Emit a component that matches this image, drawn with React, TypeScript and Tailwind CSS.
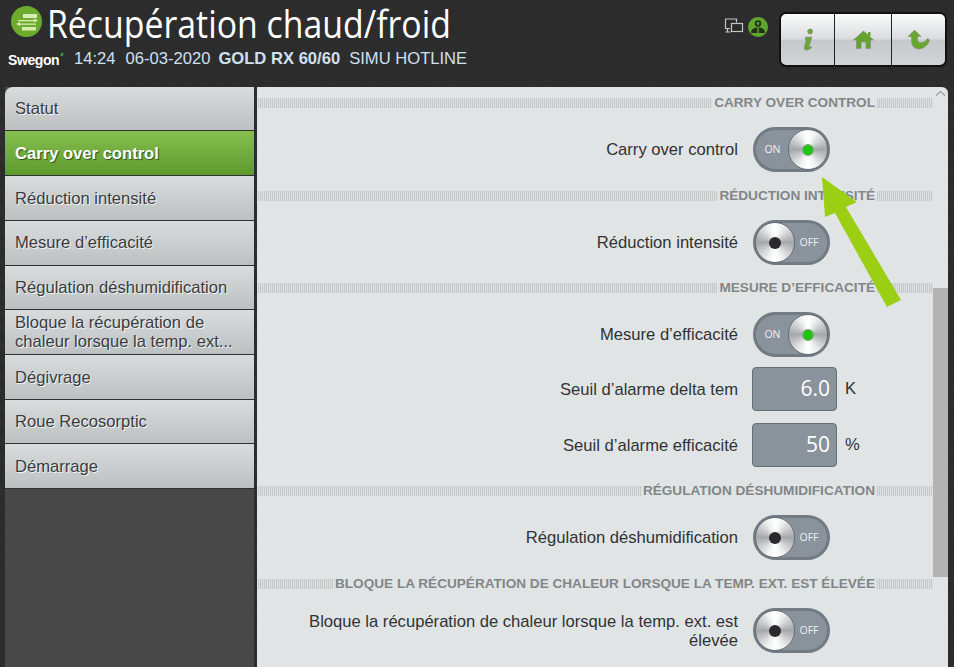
import React from "react";

const arial = "font-['Liberation_Sans',Arial,sans-serif]";
const open = "font-['Open_Sans','Noto_Sans',sans-serif]";

function Toggle({ on }: { on: boolean }) {
  return (
    <div className={`relative ml-[1px] flex h-[45px] w-[77px] shrink-0 items-center rounded-full border-[3px] border-[#727a84] bg-[#8a929c] ${on ? "justify-start" : "justify-end"}`}>
      <span className={`${open} text-center text-[10.5px] leading-none font-normal text-[#eef0f0] ${on ? "w-[33px]" : "w-[36px]"}`}>{on ? "ON" : "OFF"}</span>
      <div className={`absolute top-[-1px] flex h-[41px] w-[40px] items-center justify-center rounded-full border border-[#666d76] bg-[conic-gradient(#ffffff_0deg,#f0f1f1_25deg,#a4a8ab_90deg,#f0f1f1_155deg,#ffffff_180deg,#f0f1f1_205deg,#a4a8ab_270deg,#f0f1f1_335deg,#ffffff_360deg)] ${on ? "right-[-1px]" : "left-[-1px]"}`}>
        <div className={`h-[12px] w-[12px] rounded-full ${on ? "border border-[#8aa58a] bg-[#22c414]" : "bg-[#2a2a2c]"}`} />
      </div>
    </div>
  );
}

function Stripes({ className }: { className: string }) {
  return <div className={`h-[10px] bg-[repeating-linear-gradient(90deg,#c4c8c9_0px,#c4c8c9_1px,#dde0e0_1px,#dde0e0_2px)] ${className}`} />;
}

function Section({ title, children, top }: { title: string; children: React.ReactNode; top: string }) {
  return (
    <section className={top}>
      <div className="flex h-[11px] items-center">
        <Stripes className="min-w-0 flex-1" />
        <h2 className={`${arial} mx-[2px] whitespace-nowrap text-[13.6px] leading-none font-bold text-[#828688] uppercase`}>{title}</h2>
        <Stripes className="w-[56px] shrink-0" />
      </div>
      {children}
    </section>
  );
}

function Row({ label, children, className }: { label: React.ReactNode; children: React.ReactNode; className: string }) {
  return (
    <div className={`flex items-center ${className}`}>
      <div className={`${arial} flex w-[480px] shrink-0 justify-end text-right text-[16.6px] leading-[19px] text-[#303234]`}>
        <div className="max-w-[440px]">{label}</div>
      </div>
      <div className="ml-[14px] flex items-center">{children}</div>
    </div>
  );
}

function Field({ value, unit }: { value: string; unit: string }) {
  return (
    <>
      <div className={`${open} flex h-[44px] w-[85px] items-center justify-end rounded-[4px] border border-[#666e78] bg-[#8a929c] pr-[6px] text-[21px] text-white`}>{value}</div>
      <span className={`${arial} ml-[8px] text-[16.6px] text-[#303234]`}>{unit}</span>
    </>
  );
}

const menu: { label: React.ReactNode; h: string; active?: boolean; two?: boolean }[] = [
  { label: "Statut", h: "h-[44px] rounded-tl-[8px] pt-[2px]" },
  { label: "Carry over control", h: "h-[45px] pt-[3px]", active: true },
  { label: "Réduction intensité", h: "h-[45px] pt-[3px]" },
  { label: "Mesure d’efficacité", h: "h-[45px]" },
  { label: "Régulation déshumidification", h: "h-[44px] pt-[2px]" },
  { label: "Bloque la récupération de chaleur lorsque la temp. ext...", h: "h-[45px]", two: true },
  { label: "Dégivrage", h: "h-[45px] pt-[3px]" },
  { label: "Roue Recosorptic", h: "h-[44px] pt-[2px]" },
  { label: "Démarrage", h: "h-[45px] pt-[3px]" },
];

function IconBtn({ children, className }: { children: React.ReactNode; className: string }) {
  return <div className={`flex h-full items-center justify-center ${className}`}>{children}</div>;
}

export default function App() {
  return (
    <div className="relative h-[667px] w-[954px] overflow-hidden bg-[#2b2b2b] bg-[repeating-linear-gradient(45deg,#2a2a2a_0px,#2a2a2a_1px,#2f2f2f_1px,#2f2f2f_2px)]">
      <header className="flex h-[87px] items-start">
        <div className="min-w-0 flex-1">
          <div className="flex h-[43px] items-start pl-[11px]">
            <svg width="31" height="31" viewBox="0 0 31 31" className="mt-[6px] shrink-0">
              <circle cx="15.500" cy="15.500" r="15.500" fill="#6dab2e" />
              <g fill="#d8ecb4">
                <rect x="12" y="8" width="14" height="4" />
                <rect x="7" y="14" width="17" height="1.300" />
                <path d="M27 14.600l-4-2v4z" />
                <rect x="8" y="17.500" width="17" height="1.300" />
                <path d="M5 18.100l4-2v4z" />
                <rect x="11" y="21" width="14" height="3.500" />
              </g>
            </svg>
            <h1 className={`${open} ml-[5px] mt-[3px] origin-left scale-x-[0.89] text-[38px] leading-[40px] whitespace-nowrap text-white`}>Récupération chaud/froid</h1>
          </div>
          <div className={`${arial} mt-[6px] flex h-[21px] items-center pl-[8px] text-[16.6px] leading-none whitespace-nowrap text-[#cfe0f0]`}>
            <span className="relative w-[54px] text-[14px] font-bold tracking-[-0.4px] text-white">
              Swegon
              <span className="absolute top-[0px] left-[53px] h-[3px] w-[2px] rotate-[25deg] bg-[#3faa50]" />
            </span>
            <span className="ml-[12px]">14:24</span>
            <span className="ml-[10px]">06-03-2020</span>
            <span className="ml-[8px] font-bold">GOLD RX 60/60</span>
            <span className="ml-[9px]">SIMU HOTLINE</span>
          </div>
        </div>
        <svg width="20" height="18" viewBox="0 0 20 18" className="mt-[18px] shrink-0" fill="none" stroke="#c4c6c6" strokeWidth="1.200">
          <path d="M6 10.500H1.500V1h11v3.500" />
          <path d="M1.500 14h5M3.500 10.500V14" />
          <rect x="7.500" y="5.500" width="11" height="8" fill="#2b2b2b" />
        </svg>
        <svg width="20" height="20" viewBox="0 0 20 20" className="ml-[4px] mt-[17px] shrink-0">
          <circle cx="10" cy="10" r="10" fill="#5fa82e" />
          <circle cx="10" cy="6.500" r="3.200" fill="#24301c" />
          <circle cx="10" cy="6.500" r="1.400" fill="#5fa82e" />
          <path d="M3 16c0-4 3-5.500 7-5.500s7 1.500 7 5.500z" fill="#24301c" />
          <path d="M9.300 10.500h1.400V17H9.300z" fill="#5fa82e" />
        </svg>
        <div className="relative mt-[12px] ml-[11px] flex h-[55px] w-[168px] shrink-0 rounded-[7px] border-2 border-[#111] bg-[linear-gradient(#fbfbfb_0%,#dadcde_48%,#c6c9cc_52%,#d2d5d7_100%)]">
          <IconBtn className="w-[54px]">
            <svg width="13" height="24" viewBox="0 0 16 28">
              <circle cx="10" cy="3.500" r="3" fill="#6aaa30" stroke="#7b8a70" />
              <path d="M4.500 10.500H12L8.500 22c-.3 1 .5 1.200 2.500 0l.5 1.500C8 27 2.500 27.500 3 23.500L5.500 13.500H4z" fill="#6aaa30" stroke="#7b8a70" />
            </svg>
          </IconBtn>
          <IconBtn className="w-[57px]">
            <svg width="21" height="19" viewBox="0 0 21 19">
              <path d="M10.500 1L20.500 10h-3v8.500h-4.500V12H8v6.500H3.500V10h-3z" fill="#63a32e" stroke="#7d8b72" strokeWidth=".6" />
              <rect x="15" y="2" width="2.500" height="4" fill="#63a32e" />
            </svg>
          </IconBtn>
          <IconBtn className="flex-1">
            <svg width="23" height="21" viewBox="0 0 23 21" fill="none">
              <path d="M7.500 1L14 7.500H10.500V11c0 3.500 7 4 10-1.500L22.500 11c-2 8-12.500 12-16.500 6-1.500-2-1.500-5-1.500-9.500H1z" fill="#66a82e" stroke="#7d8b72" strokeWidth=".6" />
            </svg>
          </IconBtn>
          <span className="absolute top-[-2px] left-[53px] h-[58px] w-px bg-[#222]" />
          <span className="absolute top-[-2px] left-[110px] h-[58px] w-px bg-[#222]" />
        </div>
        <div className="w-[7px] shrink-0" />
      </header>

      <div className="flex h-[580px]">
        <nav className="ml-[5px] h-full w-[249px] shrink-0 bg-[#484848]">
          {menu.map((m, i) => (
            <div
              key={i}
              className={`${arial} flex items-center border-b-[1px] border-[#2e3031] pl-[10px] pr-[4px] text-[16.6px] ${m.h} ${m.two ? "leading-[19px]" : ""} ${
                m.active
                  ? "bg-[linear-gradient(#86bf50,#5d9a2c)] font-bold text-white [text-shadow:1px_1px_1px_#2f4d14]"
                  : "bg-[linear-gradient(#d9dcdc,#bcc0c1)] text-[#3a3c3e] [text-shadow:1px_1px_0_#f0f4f8]"
              }`}
            >
              {m.label}
            </div>
          ))}
        </nav>
        <main className="ml-[3px] flex h-full w-[691px] shrink-0 rounded-tr-[6px] bg-[#e1e4e4]">
          <div className="w-[676px] shrink-0 pl-[1px] pt-[10px]">
            <Section title="Carry over control" top="">
              <Row label="Carry over control" className="mt-[19px]"><Toggle on /></Row>
            </Section>
            <Section title="Réduction intensité" top="mt-[18px]">
              <Row label="Réduction intensité" className="mt-[19px]"><Toggle on={false} /></Row>
            </Section>
            <Section title="Mesure d’efficacité" top="mt-[17px]">
              <Row label="Mesure d’efficacité" className="mt-[19px]"><Toggle on /></Row>
              <Row label="Seuil d’alarme delta tem" className="mt-[10px]"><Field value="6.0" unit="K" /></Row>
              <Row label="Seuil d’alarme efficacité" className="mt-[12px]"><Field value="50" unit="%" /></Row>
            </Section>
            <Section title="Régulation déshumidification" top="mt-[18px]">
              <Row label="Régulation déshumidification" className="mt-[19px]"><Toggle on={false} /></Row>
            </Section>
            <Section title="Bloque la récupération de chaleur lorsque la temp. ext. est élevée" top="mt-[18px]">
              <Row label="Bloque la récupération de chaleur lorsque la temp. ext. est élevée" className="mt-[19px]"><Toggle on={false} /></Row>
            </Section>
          </div>
          <div className="flex w-[15px] shrink-0 flex-col">
            <svg width="15" height="14" viewBox="0 0 15 14" className="shrink-0" fill="none" stroke="#9a9c9e" strokeWidth="1.200">
              <path d="M3 8.500l4.500-4 4.500 4" />
            </svg>
            <div className="h-[187px] shrink-0" />
            <div className="h-[289px] w-full shrink-0 bg-[#b3b3b3]" />
          </div>
        </main>
      </div>

      <svg width="954" height="667" viewBox="0 0 954 667" className="pointer-events-none absolute top-0 left-0">
        <polygon points="822,177 857,202 846,207 901,300 887,307 835,213 825,217" fill="#9bcf14" />
      </svg>
    </div>
  );
}
